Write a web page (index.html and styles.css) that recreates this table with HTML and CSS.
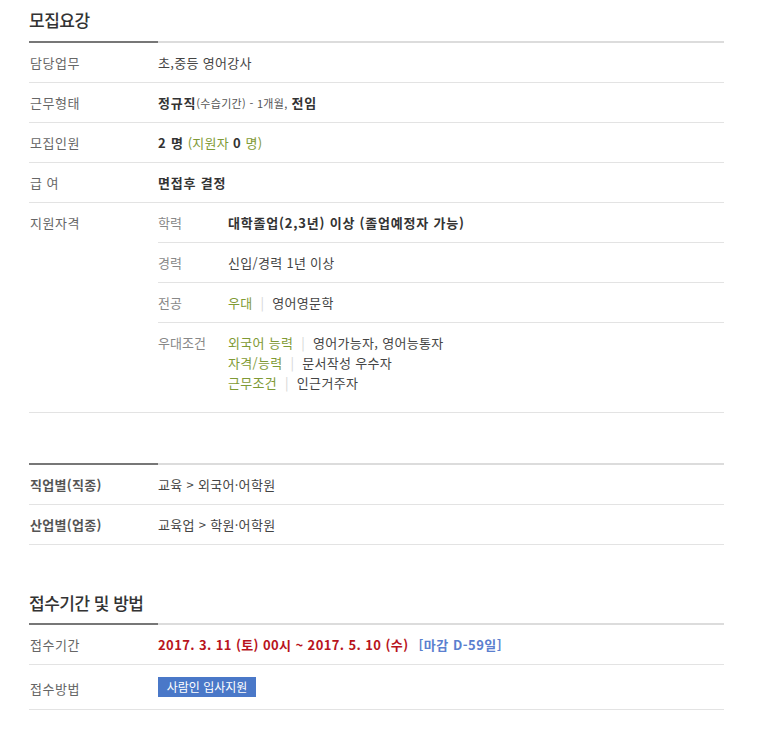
FILE: index.html
```html
<!DOCTYPE html>
<html lang="ko">
<head>
  <meta charset="UTF-8">
  <meta name="viewport" content="width=device-width, initial-scale=1">
  <title>모집요강</title>
  <link rel="stylesheet" href="styles.css">
</head>
<body>

  <div class="wrap">
    <h2 class="sec-title">모집요강</h2>
    <div class="sec-line"><span></span></div>

    <div class="row">
      <div class="label">담당업무</div>
      <div class="value">초,중등 영어강사</div>
    </div>
    <div class="row">
      <div class="label">근무형태</div>
      <div class="value"><b>정규직</b><span class="small">(수습기간) - 1개월,</span> <b>전임</b></div>
    </div>
    <div class="row">
      <div class="label">모집인원</div>
      <div class="value"><b>2 명</b> <span class="green">(지원자 <b class="dark">0</b> 명)</span></div>
    </div>
    <div class="row">
      <div class="label">급 여</div>
      <div class="value"><b>면접후 결정</b></div>
    </div>
    <div class="row row-sub">
      <div class="label label-top">지원자격</div>
      <div class="sub-list">
        <div class="sub-row">
          <div class="sub-label">학력</div>
          <div class="value"><b>대학졸업(2,3년) 이상 (졸업예정자 가능)</b></div>
        </div>
        <div class="sub-row">
          <div class="sub-label">경력</div>
          <div class="value">신입/경력 1년 이상</div>
        </div>
        <div class="sub-row">
          <div class="sub-label">전공</div>
          <div class="value"><span class="green">우대</span><i class="bar">|</i>영어영문학</div>
        </div>
        <div class="sub-row sub-last">
          <div class="sub-label">우대조건</div>
          <div class="value">
            <p><span class="green">외국어 능력</span><i class="bar">|</i>영어가능자, 영어능통자</p>
            <p><span class="green">자격/능력</span><i class="bar">|</i>문서작성 우수자</p>
            <p><span class="green">근무조건</span><i class="bar">|</i>인근거주자</p>
          </div>
        </div>
      </div>
    </div>

    <div class="sec-line sec-gap"><span></span></div>
    <div class="row">
      <div class="label strong">직업별(직종)</div>
      <div class="value">교육 &gt; 외국어·어학원</div>
    </div>
    <div class="row">
      <div class="label strong">산업별(업종)</div>
      <div class="value">교육업 &gt; 학원·어학원</div>
    </div>

    <h2 class="sec-title sec-title-2">접수기간 및 방법</h2>
    <div class="sec-line"><span></span></div>
    <div class="row">
      <div class="label">접수기간</div>
      <div class="value"><b class="red">2017. 3. 11 (토) 00시 ~ 2017. 5. 10 (수)</b> <b class="blue">[마감 D-59일]</b></div>
    </div>
    <div class="row row-btn">
      <div class="label">접수방법</div>
      <div class="value"><a class="apply-btn" href="#">사람인 입사지원</a></div>
    </div>
  </div>

</body>
</html>
```

FILE: styles.css
```css
body {
  margin: 0;
  background: #fff;
  font-family: "Noto Sans CJK KR", "Liberation Sans", sans-serif;
  font-size: 13px;
  color: #333;
}

.wrap {
  width: 695px;
  margin-left: 29px;
}

.sec-title {
  margin: 0;
  padding-top: 8px;
  height: 33px;
  font-size: 17px;
  font-weight: 500;
  letter-spacing: -0.5px;
  line-height: 24px;
  color: #333;
}

.sec-title-2 {
  margin-top: 38px;
  height: 32px;
}

.sec-line {
  height: 2px;
  background: #dcdcdc;
}

.sec-line span {
  display: block;
  width: 129px;
  height: 2px;
  background: #777;
}

.sec-gap {
  margin-top: 50px;
}

.row {
  display: flex;
  border-bottom: 1px solid #e3e3e3;
}

.label {
  width: 129px;
  flex: none;
  padding: 10px 0 9px 1px;
  line-height: 20px;
  letter-spacing: 0.5px;
  color: #666;
  box-sizing: border-box;
}

.label.strong {
  font-weight: bold;
  color: #555;
  letter-spacing: 0.3px;
}

.value {
  padding: 10px 0 9px;
  line-height: 20px;
  letter-spacing: 0.3px;
  color: #444;
}

.value p {
  margin: 0;
}

.value b {
  color: #333;
  letter-spacing: 0.8px;
}

.small {
  font-size: 11px;
  color: #555;
}

.green {
  color: #7f9a35;
}

.green .dark {
  color: #333;
}

.bar {
  font-style: normal;
  color: #d5d5d5;
  margin: 0 8px;
}

.row-sub .label-top {
  align-self: flex-start;
}

.sub-list {
  flex: 1;
}

.sub-row {
  display: flex;
  border-bottom: 1px solid #e3e3e3;
}

.sub-row.sub-last {
  border-bottom: none;
  padding-bottom: 10px;
}

.sub-label {
  width: 70px;
  flex: none;
  padding: 10px 0 9px;
  line-height: 20px;
  color: #888;
}

.value b.red {
  color: #b8141c;
  letter-spacing: 0.4px;
}

.value b.blue {
  color: #5b7fcf;
  margin-left: 6px;
  letter-spacing: 0.5px;
}

.row-btn .value {
  padding-top: 12px;
  padding-bottom: 12px;
}

.row-btn .label {
  padding-top: 14px;
  padding-bottom: 10px;
}

.apply-btn {
  display: block;
  width: 98px;
  height: 20px;
  line-height: 20px;
  text-align: center;
  background: #4a78c8;
  color: #fff;
  text-decoration: none;
  font-size: 12px;
  letter-spacing: 0;
}
```
